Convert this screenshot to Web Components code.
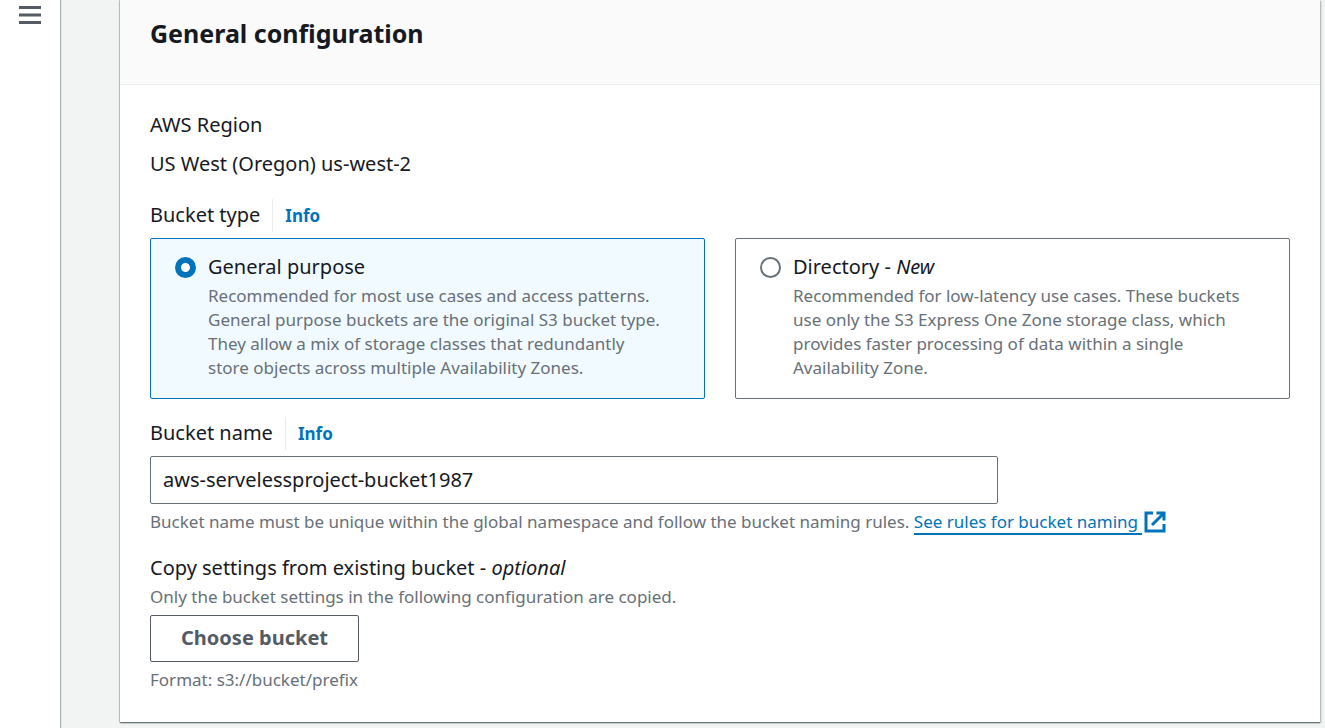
<!DOCTYPE html>
<html lang="en">
<head>
<meta charset="utf-8">
<title>Create bucket</title>
<style>
  html, body { margin: 0; height: 100%; }
  body {
    --ink: #16191f;
    --muted: #687078;
    --link: #0073bb;
    --edge: #eaeded;
    --row: 33px;
    font: 20px/32px "Noto Sans", "Open Sans", sans-serif;
    color: var(--ink);
    background: #f2f3f3;
  }
</style>
</head>
<body>
<app-shell>
  <config-panel heading="General configuration">
    <form-field label="AWS Region">US West (Oregon) us-west-2</form-field>
    <form-field label="Bucket type" info>
      <tile-group>
        <radio-tile value="general" checked>
          General purpose
          <span slot="description">Recommended for most use cases and access patterns. General purpose buckets are the original S3 bucket type. They allow a mix of storage classes that redundantly store objects across multiple Availability Zones.</span>
        </radio-tile>
        <radio-tile value="directory">
          Directory - <em>New</em>
          <span slot="description">Recommended for low-latency use cases. These buckets use only the S3 Express One Zone storage class, which provides faster processing of data within a single Availability Zone.</span>
        </radio-tile>
      </tile-group>
    </form-field>
    <name-field value="aws-servelessproject-bucket1987">
      Bucket name must be unique within the global namespace and follow the bucket naming rules.
      <external-link href="#naming">See rules for bucket naming</external-link>
    </name-field>
    <bucket-picker></bucket-picker>
  </config-panel>
</app-shell>

<script>
const define = (name, html, setup) => {
  const template = document.createElement('template');
  template.innerHTML = html;
  customElements.define(name, class extends HTMLElement {
    constructor() {
      super();
      this.attachShadow({ mode: 'open' }).append(template.content.cloneNode(true));
    }
    connectedCallback() {
      if (setup) setup(this, this.shadowRoot);
    }
  });
};

define('app-shell', `
  <style>
    :host { display: flex; min-height: 100vh; }
    nav { flex: none; width: 60px; background: #fff; box-shadow: 1px 0 1px #aab7b8; display: flex; justify-content: center; align-items: flex-start; }
    button { margin: 0; padding: 4px; border: 0; background: none; color: #545b64; display: flex; }
    main { flex: 1; min-width: 0; padding: 0 5px 6px 60px; }
  </style>
  <nav aria-label="Service navigation">
    <button type="button" aria-label="Open navigation">
      <svg width="22" height="22" viewBox="0 0 22 22" fill="none" stroke="currentColor" stroke-width="3" aria-hidden="true">
        <path d="M0 3.5H22M0 11H22M0 18.5H22"/>
      </svg>
    </button>
  </nav>
  <main><slot></slot></main>
`);

define('config-panel', `
  <style>
    :host { display: block; background: #fff; box-shadow: 0 1px 1px rgba(0,28,36,.3), 1px 1px 2px rgba(0,28,36,.25), -1px 0 1px rgba(0,28,36,.15), 0 1px 1px rgba(0,28,36,.25); }
    header { padding: 17px 30px 34px; background: #fafafa; border-bottom: 1px solid var(--edge); }
    h2 { margin: 0; font-size: 25px; line-height: 33px; font-weight: 700; }
    .body { display: grid; gap: 18px; padding: 24px 30px 30px; }
  </style>
  <header><h2></h2></header>
  <div class="body"><slot></slot></div>
`, (el, root) => { root.querySelector('h2').textContent = el.getAttribute('heading'); });

define('info-link', `
  <style>
    :host { display: inline-flex; border-left: 1px solid var(--edge); padding-left: 12px; line-height: 33px; }
    a { color: var(--link); font-size: 17px; font-weight: 700; text-decoration: none; }
  </style>
  <a href="#info">Info</a>
`);

define('form-field', `
  <style>
    :host { display: grid; gap: 6px; }
    .label { display: flex; gap: 12px; min-height: var(--row); }
    .value { min-height: var(--row); }
  </style>
  <div class="label"><span></span></div>
  <div class="value"><slot></slot></div>
`, (el, root) => {
  const label = root.querySelector('.label');
  label.firstElementChild.textContent = el.getAttribute('label');
  if (el.hasAttribute('info')) label.append(document.createElement('info-link'));
});

define('tile-group', `
  <style>
    :host { display: grid; grid-template-columns: 1fr 1fr; gap: 30px; }
  </style>
  <slot></slot>
`, el => {
  el.setAttribute('role', 'radiogroup');
  el.setAttribute('aria-label', 'Bucket type');
  el.addEventListener('change', event => {
    for (const tile of el.children) tile.toggleAttribute('checked', tile === event.target);
    for (const tile of el.children) tile.shadowRoot.querySelector('input').checked = tile.hasAttribute('checked');
  });
});

define('radio-tile', `
  <style>
    :host { display: block; box-sizing: border-box; border: 1px solid var(--muted); border-radius: 2px; background: #fff; }
    :host([checked]) { border-color: var(--link); background: #f1faff; }
    label { display: grid; grid-template-columns: 21px 1fr; column-gap: 12px; align-items: center; padding: 12px 36px 18px 24px; }
    input { appearance: none; box-sizing: border-box; width: 21px; height: 21px; margin: 0; border: 2px solid var(--muted); border-radius: 50%; background: #fff; }
    input:checked { border: 6px solid var(--link); }
    .title { min-height: var(--row); }
    .text { grid-column: 2; font-size: 17px; line-height: 24px; color: var(--muted); }
  </style>
  <label>
    <input type="radio" name="type">
    <span class="title"><slot></slot></span>
    <span class="text"><slot name="description"></slot></span>
  </label>
`, (el, root) => {
  const input = root.querySelector('input');
  input.checked = el.hasAttribute('checked');
  input.value = el.getAttribute('value');
  input.addEventListener('change', () => el.dispatchEvent(new Event('change', { bubbles: true })));
});

define('name-field', `
  <style>
    :host { display: grid; gap: 6px; }
    .label { display: flex; gap: 12px; min-height: var(--row); }
    .control { display: grid; grid-template-columns: repeat(12, 1fr); column-gap: 30px; }
    input { grid-column: span 9; box-sizing: border-box; min-width: 0; height: 48px; margin: 0; padding: 0 12px 2px; border: 1px solid var(--muted); border-radius: 2px; background: #fff; color: inherit; font: inherit; }
    .hint { font-size: 17px; line-height: 24px; color: var(--muted); }
  </style>
  <div class="label"><label for="name">Bucket name</label><info-link></info-link></div>
  <div class="control"><input id="name" type="text"></div>
  <div class="hint"><slot></slot></div>
`, (el, root) => { root.querySelector('input').value = el.getAttribute('value'); });

define('external-link', `
  <style>
    :host { display: inline; }
    a { color: var(--link); text-decoration: none; }
    span { box-shadow: 0 2px var(--link); display: inline-block; padding-right: 4px; line-height: 22px; }
    svg { margin: -1px 0 -1px 2px; vertical-align: top; }
  </style>
  <a><span><slot></slot></span><svg width="22" height="24" viewBox="0 -2 22 24" fill="none" stroke="currentColor" stroke-width="3" aria-hidden="true">
    <path d="M9 2H2V20H20V13M12.5 2H20V9.5M20 2L8 14"/>
  </svg></a>
`, (el, root) => { root.querySelector('a').href = el.getAttribute('href'); });

define('bucket-picker', `
  <style>
    :host { display: grid; gap: 6px; justify-items: start; }
    .title { min-height: var(--row); }
    .hint { font-size: 17px; line-height: 24px; color: var(--muted); }
    button { margin: 0; padding: 6px 30px 7px; border: 1px solid #545b64; border-radius: 2px; background: #fff; color: #545b64; font: inherit; font-weight: 700; }
  </style>
  <div>
    <div class="title">Copy settings from existing bucket - <em>optional</em></div>
    <div class="hint" id="about">Only the bucket settings in the following configuration are copied.</div>
  </div>
  <button type="button" aria-describedby="about">Choose bucket</button>
  <div class="hint">Format: s3://bucket/prefix</div>
`);
</script>
</body>
</html>
